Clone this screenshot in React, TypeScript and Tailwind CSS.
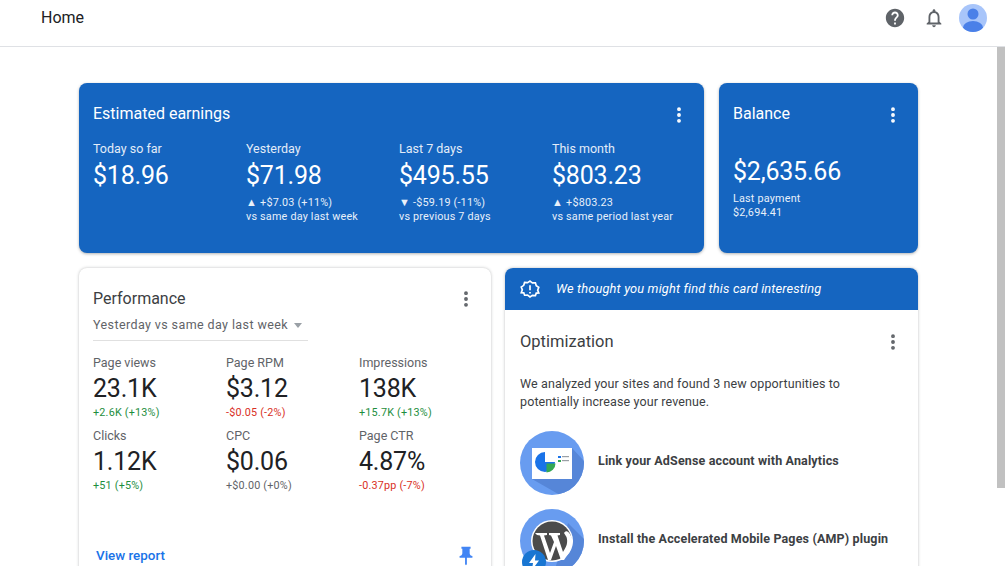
import { MoreVertical } from "lucide-react"

const earnings = [
  { label: "Today so far", value: "$18.96" },
  { label: "Yesterday", value: "$71.98", up: true, change: "+$7.03 (+11%)", note: "vs same day last week" },
  { label: "Last 7 days", value: "$495.55", up: false, change: "-$59.19 (-11%)", note: "vs previous 7 days" },
  { label: "This month", value: "$803.23", up: true, change: "+$803.23", note: "vs same period last year" },
]

const stats = [
  { label: "Page views", value: "23.1K", change: "+2.6K (+13%)", color: "text-[#1e8e3e]" },
  { label: "Page RPM", value: "$3.12", change: "-$0.05 (-2%)", color: "text-[#d93025]" },
  { label: "Impressions", value: "138K", change: "+15.7K (+13%)", color: "text-[#1e8e3e]" },
  { label: "Clicks", value: "1.12K", change: "+51 (+5%)", color: "text-[#1e8e3e]" },
  { label: "CPC", value: "$0.06", change: "+$0.00 (+0%)", color: "text-[#5f6368]" },
  { label: "Page CTR", value: "4.87%", change: "-0.37pp (-7%)", color: "text-[#d93025]" },
]

const Dots = ({ className }: { className: string }) => (
  <MoreVertical size={20} strokeWidth={2.6} className={className} />
)

const Avatar = () => (
  <svg width="30" height="30" viewBox="0 0 30 30">
    <defs>
      <clipPath id="avatarClip"><circle cx="15" cy="15" r="14" /></clipPath>
    </defs>
    <circle cx="15" cy="15" r="14" fill="#a8c5fa" />
    <g clipPath="url(#avatarClip)" fill="#4a80e8">
      <circle cx="15" cy="11" r="5.5" />
      <ellipse cx="15" cy="24.5" rx="10" ry="6.5" />
    </g>
  </svg>
)

const AnalyticsArt = () => (
  <svg width="64" height="64" viewBox="0 0 64 64" className="shrink-0">
    <defs>
      <clipPath id="artOne"><circle cx="32" cy="32" r="32" /></clipPath>
    </defs>
    <circle cx="32" cy="32" r="32" fill="#689cf0" />
    <path d="M52 17 L64 30 L64 64 L40 64 L12 48 L52 48 Z" fill="#5686d8" clipPath="url(#artOne)" />
    <rect x="12" y="17" width="40" height="31" fill="#ffffff" />
    <path d="M25 21 A10 10 0 1 0 35 31 H25 Z" fill="#1a73e8" />
    <path d="M26.5 32.5 H35.5 A9 9 0 0 1 26.5 41.5 Z" fill="#34a853" />
    <rect x="38" y="25" width="3" height="2" fill="#1a73e8" />
    <rect x="38" y="29" width="3" height="2" fill="#34a853" />
    <rect x="42" y="25" width="7" height="1.2" fill="#9aa0a6" />
    <rect x="42" y="29" width="7" height="1.2" fill="#9aa0a6" />
  </svg>
)

const WordpressArt = () => (
  <div className="relative w-16 h-16 shrink-0">
    <svg width="64" height="64" viewBox="0 0 64 64">
      <defs>
        <clipPath id="artTwo"><circle cx="32" cy="32" r="32" /></clipPath>
      </defs>
      <circle cx="32" cy="32" r="32" fill="#689cf0" />
      <path d="M48 14 L64 30 L64 64 L34 64 Z" fill="#5686d8" clipPath="url(#artTwo)" />
      <circle cx="32" cy="32" r="21" fill="#ffffff" />
      <circle cx="32" cy="32" r="19.5" fill="#4b4b4b" />
      <path d="M15 24 H27 V26 L24 26.5 L30 44 L34 33 L31 26.5 L29 26 V24 H40 V26 L37.5 26.5 L43 43 C47 37 48 33 46.5 28 L44 24 C46 21 48 22 50 25 L53 32 L50 42 L44 51 L41 51 L36 37 L31 51 L28 51 L20 26.5 L17 26 Z" fill="#ffffff" />
    </svg>
    <div className="absolute left-[2px] top-[41px] w-6 h-6 rounded-full bg-[#1976d2] flex items-center justify-center">
      <svg width="14" height="16" viewBox="0 0 14 16">
        <path d="M8.5 0 L2 9 H6 L5 16 L12 6.5 H8 Z" fill="#ffffff" />
      </svg>
    </div>
  </div>
)

export default function App() {
  return (
    <div className="h-[566px] w-[1005px] overflow-hidden bg-white font-['Roboto',sans-serif] flex flex-col">
      {/* Top bar */}
      <header className="h-[47px] shrink-0 border-b border-[#dfe1e5] flex items-center pl-[41px] pr-[17px] pb-[10px]">
        <h1 className="text-[16px] leading-[20px] text-[#202124] font-normal flex-1">Home</h1>
        <div className="flex items-center">
          <svg width="22" height="22" viewBox="0 0 24 24" fill="#5f6368">
            <path d="M12 2C6.48 2 2 6.48 2 12s4.48 10 10 10 10-4.48 10-10S17.52 2 12 2zm1 17h-2v-2h2v2zm2.07-7.75l-.9.92C13.45 12.9 13 13.5 13 15h-2v-.5c0-1.1.45-2.1 1.17-2.83l1.24-1.26c.37-.36.59-.86.59-1.41 0-1.1-.9-2-2-2s-2 .9-2 2H8c0-2.21 1.79-4 4-4s4 1.79 4 4c0 .88-.36 1.68-.93 2.25z" />
          </svg>
          <svg width="22" height="22" viewBox="0 0 24 24" fill="#5f6368" className="ml-[17px]">
            <path d="M12 22c1.1 0 2-.9 2-2h-4c0 1.1.9 2 2 2zm6-6v-5c0-3.07-1.63-5.64-4.5-6.32V4c0-.83-.67-1.5-1.5-1.5s-1.5.67-1.5 1.5v.68C7.64 5.36 6 7.92 6 11v5l-2 2v1h16v-1l-2-2zm-2 1H8v-6c0-2.48 1.51-4.5 4-4.5s4 2.02 4 4.5v6z" />
          </svg>
          <div className="ml-[13px]"><Avatar /></div>
        </div>
      </header>

      <div className="flex flex-1 min-h-0">
        <main className="w-[997px] pl-[79px] pr-[79px] pt-[36px] flex flex-col gap-[15px]">
          {/* Earnings row */}
          <div className="flex gap-[15px] h-[170px] shrink-0">
            <section className="w-[625px] bg-[#1565c0] rounded-lg shadow-[0_1px_3px_rgba(60,64,67,0.4)] pl-[14px] pt-[19px] text-white">
              <div className="flex items-center justify-between pr-[15px] h-[24px]">
                <h2 className="text-[16px] leading-[24px] font-normal">Estimated earnings</h2>
                <Dots className="text-white mt-[2px]" />
              </div>
              <div className="grid grid-cols-4 w-[612px] mt-[15px]">
                {earnings.map((e) => (
                  <div key={e.label}>
                    <div className="text-[12.5px] leading-[16px] text-[#e3ecf8]">{e.label}</div>
                    <div className="text-[25px] leading-[30px] mt-[4px] tracking-[-0.2px]">{e.value}</div>
                    {e.change && (
                      <div className="mt-[5px] text-[10.8px] leading-[14px] text-[#e8f0fa] tracking-[0.2px]">
                        <div><span className="text-[11px] leading-[14px] mr-[3px]">{e.up ? "▲" : "▼"}</span>{e.change}</div>
                        <div>{e.note}</div>
                      </div>
                    )}
                  </div>
                ))}
              </div>
            </section>
            <section className="w-[199px] bg-[#1565c0] rounded-lg shadow-[0_1px_3px_rgba(60,64,67,0.4)] pl-[14px] pt-[19px] text-white">
              <div className="flex items-center justify-between pr-[15px] h-[24px]">
                <h2 className="text-[16px] leading-[24px] font-normal">Balance</h2>
                <Dots className="text-white mt-[2px]" />
              </div>
              <div className="text-[25px] leading-[30px] mt-[31px] tracking-[-0.2px]">$2,635.66</div>
              <div className="mt-[5px] text-[10.8px] leading-[14px] text-[#e8f0fa] tracking-[0.2px]">
                <div>Last payment</div>
                <div>$2,694.41</div>
              </div>
            </section>
          </div>

          {/* Lower row */}
          <div className="flex gap-[14px] flex-1 min-h-0">
            <section className="w-[412px] h-[320px] bg-white rounded-lg shadow-[0_0_3px_rgba(60,64,67,0.35)] pl-[14px] pt-[19px]">
              <div className="flex items-center justify-between pr-[15px] h-[24px]">
                <h2 className="text-[16px] leading-[24px] font-normal text-[#3c4043]">Performance</h2>
                <Dots className="text-[#5f6368]" />
              </div>
              <div className="w-[215px] h-[28px] mt-[2px] border-b border-[#e0e0e0] flex items-center text-[12.5px] text-[#5f6368] tracking-[0.4px] pb-[3px]">
                Yesterday vs same day last week
                <span className="ml-[6px] w-0 h-0 border-x-[4.5px] border-x-transparent border-t-[5px] border-t-[#9aa0a6]" />
              </div>
              <div className="grid grid-cols-3 w-[399px] mt-[14px] gap-y-[8px]">
                {stats.map((s) => (
                  <div key={s.label}>
                    <div className="text-[12.5px] leading-[16px] text-[#5f6368]">{s.label}</div>
                    <div className="text-[25px] leading-[30px] mt-[3px] tracking-[-0.2px] text-[#202124]">{s.value}</div>
                    <div className={`text-[10.8px] leading-[14px] mt-[2px] tracking-[0.2px] ${s.color}`}>{s.change}</div>
                  </div>
                ))}
              </div>
              <div className="flex items-center justify-between pl-[3px] pr-[14px] mt-[52px]">
                <span className="text-[13.4px] font-medium text-[#1a73e8]">View report</span>
                <svg width="22" height="22" viewBox="0 0 24 24" fill="#4285f4">
                  <path d="M16 9V4h1V2H7v2h1v5c0 1.66-1.34 3-3 3v2h5.97v7l1 1 1-1v-7H19v-2c-1.66 0-3-1.34-3-3z" />
                </svg>
              </div>
            </section>

            <section className="w-[413px] h-[320px] bg-white rounded-lg shadow-[0_0_3px_rgba(60,64,67,0.35)] overflow-hidden">
              <div className="h-[42px] bg-[#1565c0] flex items-center pl-[15px] text-white">
                <svg width="20" height="20" viewBox="0 0 24 24" fill="none" stroke="#ffffff" strokeWidth="2">
                  <path d="M12 2.5l2.9 2.2 3.6-.2 1 3.5 3 2-1.3 3.4 1.3 3.4-3 .2-1 2.9-3.6-.2L12 21.5l-2.9-2.2-3.6.2-1-2.9-3-.2 1.3-3.4-1.3-3.4 3-2 1-3.5 3.6.2z" />
                  <path d="M12 7.5v6M12 15.5v2" />
                </svg>
                <span className="ml-[16px] text-[12.8px] italic tracking-[0.16px]">We thought you might find this card interesting</span>
              </div>
              <div className="pl-[15px] pt-[20px]">
                <div className="flex items-center justify-between pr-[15px] h-[24px]">
                  <h2 className="text-[16.5px] leading-[24px] font-normal text-[#3c4043]">Optimization</h2>
                  <Dots className="text-[#5f6368]" />
                </div>
                <p className="mt-[21px] text-[12.5px] leading-[18px] text-[#3c4043] tracking-[0.12px]">
                  We analyzed your sites and found 3 new opportunities to<br />potentially increase your revenue.
                </p>
                <div className="mt-[20px] flex flex-col gap-[14px]">
                  <div className="flex items-center gap-[14px]">
                    <AnalyticsArt />
                    <span className="text-[12.5px] font-bold text-[#3c4043] tracking-[0.15px] pb-[4px]">Link your AdSense account with Analytics</span>
                  </div>
                  <div className="flex items-center gap-[14px]">
                    <WordpressArt />
                    <span className="text-[12.5px] font-bold text-[#3c4043] tracking-[0.15px] pb-[4px]">Install the Accelerated Mobile Pages (AMP) plugin</span>
                  </div>
                </div>
              </div>
            </section>
          </div>
        </main>

        {/* Scrollbar */}
        <div className="w-[8px] shrink-0">
          <div className="h-[441px] bg-[#c1c1c1]" />
        </div>
      </div>
    </div>
  )
}
